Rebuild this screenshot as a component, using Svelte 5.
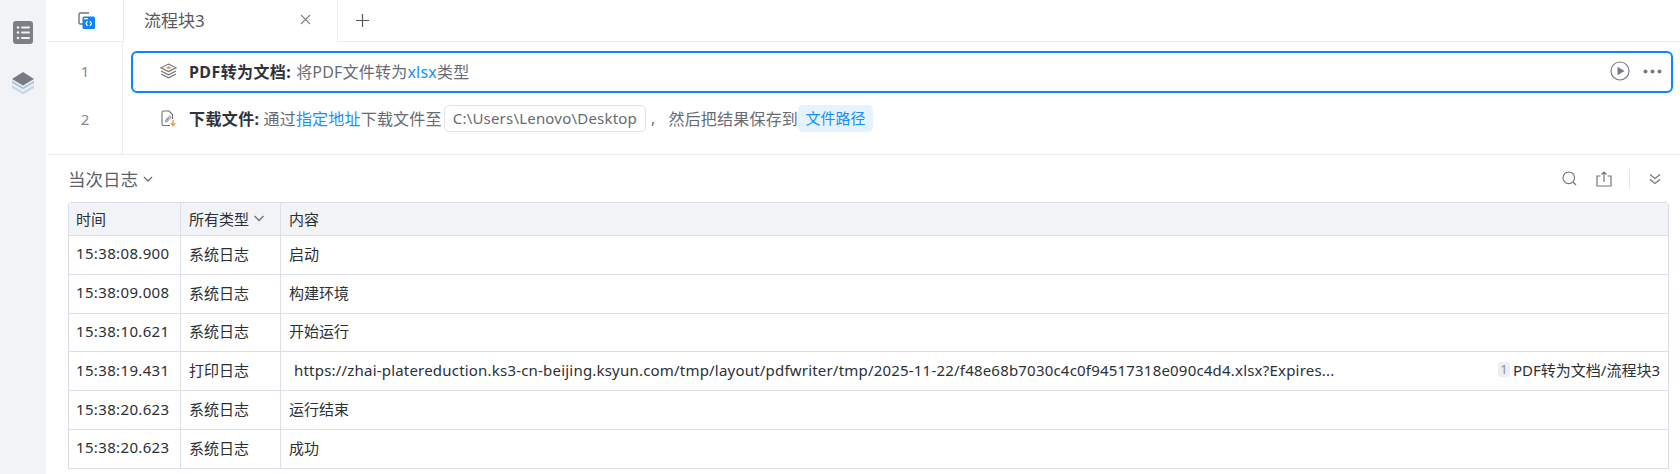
<script>
  const rows = [
    { t: '15:38:08.900', k: '系统日志', c: '启动' },
    { t: '15:38:09.008', k: '系统日志', c: '构建环境' },
    { t: '15:38:10.621', k: '系统日志', c: '开始运行' },
    { t: '15:38:19.431', k: '打印日志', c: 'https://zhai-platereduction.ks3-cn-beijing.ksyun.com/tmp/layout/pdfwriter/tmp/2025-11-22/f48e68b7030c4c0f94517318e090c4d4.xlsx?Expires...', link: true },
    { t: '15:38:20.623', k: '系统日志', c: '运行结束' },
    { t: '15:38:20.623', k: '系统日志', c: '成功' }
  ];
</script>

<div class="page">
  <aside class="side">
    <svg class="side-list" width="20" height="23" viewBox="0 0 20 23">
      <rect width="20" height="23" rx="3" fill="#7b8087"/>
      <g fill="#eef0f4">
        <circle cx="5" cy="6.5" r="1.3"/><circle cx="5" cy="11.5" r="1.3"/><circle cx="5" cy="17" r="1.3"/>
        <rect x="8" y="5.5" width="9" height="2" rx="1"/><rect x="8" y="10.5" width="9" height="2" rx="1"/><rect x="8" y="16" width="9" height="2" rx="1"/>
      </g>
    </svg>
    <svg class="side-layers" width="24" height="24" viewBox="0 0 24 24">
      <path d="M1 14l11 6.500L23 14v3l-11 6.500L1 17z" fill="#c9d8e8"/>
      <path d="M1 9.500l11 6.500 11-6.500v2.500l-11 6.500L1 12z" fill="#b6c6d8"/>
      <path d="M12 1l11 7-11 6.500L1 8z" fill="#777c84"/>
    </svg>
  </aside>

  <main class="main">
    <div class="tabs">
      <div class="tab-icon">
        <svg width="17" height="17" viewBox="0 0 17 17">
          <path d="M11 1H2.500A1.500 1.500 0 0 0 1 2.500V10.500A1.500 1.500 0 0 0 2.500 12H5" fill="none" stroke="#71767d" stroke-width="1.400"/>
          <rect x="4.500" y="4.500" width="12.500" height="12.500" rx="1.500" fill="#0a84ff"/>
          <rect x="6" y="6" width="4" height="1.300" fill="#fff"/>
          <path d="M9.500 9.200 8 11.500l1.500 2.300M12 9.200l1.500 2.300-1.500 2.300" fill="none" stroke="#fff" stroke-width="1.200"/>
        </svg>
      </div>
      <div class="tab">
        <span>流程块3</span>
        <svg width="11" height="11" viewBox="0 0 11 11"><path d="M1 1l9 9M10 1l-9 9" stroke="#7f8389" stroke-width="1.100" fill="none"/></svg>
      </div>
      <div class="add">
        <svg width="13" height="13" viewBox="0 0 13 13"><path d="M6.500 0v13M0 6.500h13" stroke="#555a61" stroke-width="1.200"/></svg>
      </div>
    </div>

    <div class="flow">
      <div class="nums"><div class="num">1</div><div class="num">2</div></div>
      <div class="steps">
        <div class="step active">
          <svg class="step-ico" width="17" height="16" viewBox="0 0 17 16">
            <path d="M8.500 1 16 4.800 8.500 8.600 1 4.800z" fill="none" stroke="#6d7279" stroke-width="1.100"/>
            <path d="M5.500 4.800 8.500 3.500l3 1.300-3 1.300z" fill="#ff8a1e"/>
            <path d="M1 8l7.500 3.800L16 8M1 11l7.500 3.800L16 11" fill="none" stroke="#6d7279" stroke-width="1.100"/>
          </svg>
          <b>PDF转为文档:</b>
          <span class="desc">将PDF文件转为<em>xlsx</em>类型</span>
          <span class="step-tools">
            <svg width="20" height="20" viewBox="0 0 20 20"><circle cx="10" cy="10" r="9" fill="none" stroke="#777c83" stroke-width="1.200"/><path d="M7.500 5.800 14.500 10l-7 4.200z" fill="#777c83"/></svg>
            <svg width="19" height="5" viewBox="0 0 19 5"><circle cx="2.500" cy="2.500" r="2" fill="#777c83"/><circle cx="9.500" cy="2.500" r="2" fill="#777c83"/><circle cx="16.500" cy="2.500" r="2" fill="#777c83"/></svg>
          </span>
        </div>
        <div class="step">
          <svg class="step-ico" width="15" height="17" viewBox="0 0 15 17">
            <path d="M9 15.500H2.500A1.500 1.500 0 0 1 1 14V2.500A1.500 1.500 0 0 1 2.500 1H8l3.500 3.500V9" fill="none" stroke="#6d7279" stroke-width="1.100"/>
            <path d="M4.500 10.500 8 6.500a1 1 0 0 1 1.500 1.300L5.700 12a.6.600 0 0 1-1-.8L8 7.500" fill="none" stroke="#6d7279" stroke-width=".9"/>
            <path d="M12 10v5M9.800 13.200 12 15.600l2.200-2.400" fill="none" stroke="#ff8a1e" stroke-width="1.200"/>
          </svg>
          <b>下载文件:</b>
          <span class="desc">通过<em>指定地址</em>下载文件至</span>
          <span class="path">C:\Users\Lenovo\Desktop</span>
          <span class="desc comma">,</span>
          <span class="desc then">然后把结果保存到</span>
          <span class="var">文件路径</span>
        </div>
      </div>
    </div>

    <section class="log">
      <div class="log-head">
        <div class="log-title">当次日志
          <svg width="10" height="6" viewBox="0 0 10 6"><path d="M1 1l4 4 4-4" fill="none" stroke="#6e7278" stroke-width="1.300"/></svg>
        </div>
        <div class="log-tools">
          <svg width="15" height="15" viewBox="0 0 15 15"><circle cx="6.800" cy="6.800" r="5.800" fill="none" stroke="#70757c" stroke-width="1.200"/><path d="M11 11l3 3" stroke="#70757c" stroke-width="1.200"/></svg>
          <svg class="share" width="16" height="16" viewBox="0 0 16 16"><path d="M4.500 5H1v10h14V5h-3.500" fill="none" stroke="#70757c" stroke-width="1.200"/><path d="M8 11V1M5.500 3.500 8 1l2.500 2.500" fill="none" stroke="#70757c" stroke-width="1.200"/></svg>
          <i class="sep"></i>
          <svg width="12" height="12" viewBox="0 0 12 12"><path d="M1 1.500l5 4 5-4M1 6.500l5 4 5-4" fill="none" stroke="#70757c" stroke-width="1.200"/></svg>
        </div>
      </div>

      <div class="table">
        <div class="row head">
          <div class="c1">时间</div>
          <div class="c2">所有类型
            <svg width="12" height="7" viewBox="0 0 12 7"><path d="M1.500 1l4.500 4.500L10.500 1" fill="none" stroke="#6e7278" stroke-width="1.300"/></svg>
          </div>
          <div class="c3">内容</div>
        </div>
        {#each rows as r}
          <div class="row">
            <div class="c1 time">{r.t}</div>
            <div class="c2">{r.k}</div>
            <div class="c3" class:link={r.link}>
              <span class="msg">{r.c}</span>
              {#if r.link}
                <span class="src"><i>1</i>PDF转为文档/流程块3</span>
              {/if}
            </div>
          </div>
        {/each}
      </div>
    </section>
  </main>
</div>

<style>
  :global(body) {
    margin: 0;
    background: #fff;
    overflow: hidden;
  }
  .page {
    display: flex;
    height: 474px;
    overflow: hidden;
    font-family: "Noto Sans", "Noto Sans CJK SC", sans-serif;
    font-size: 15px;
    color: #2b2f36;
  }
  .side {
    width: 46px;
    flex: none;
    background: #f1f3f7;
    display: flex;
    flex-direction: column;
    align-items: center;
    padding-top: 21px;
    box-sizing: border-box;
  }
  .side-layers { margin-top: 27px; margin-left: -1px; }
  .main { flex: 1; min-width: 0; margin-left: 2px; }
  .tabs {
    display: flex;
    height: 42px;
    box-sizing: border-box;
    align-items: stretch;
  }
  .tab-icon {
    width: 75px;
    border-bottom: 1px solid #ececee;
    display: flex;
    justify-content: center;
    padding-top: 12px;
    box-sizing: border-box;
    padding-left: 2px;
  }
  .tab {
    width: 215px;
    box-sizing: border-box;
    border-left: 1px solid #ececee;
    border-right: 1px solid #ececee;
    padding: 0 26px 3px 20px;
    display: flex;
    justify-content: space-between;
    align-items: center;
    font-size: 17px;
    color: #555a61;
  }
  .add {
    flex: 1;
    display: flex;
    align-items: flex-start;
    border-bottom: 1px solid #ececee;
    padding: 14px 0 0 18px;
    box-sizing: border-box;
  }
  .flow {
    display: flex;
    height: 113px;
    border-bottom: 1px solid #ececee;
    box-sizing: border-box;
  }
  .nums {
    width: 75px;
    box-sizing: border-box;
    border-right: 1px solid #ececee;
    flex: none;
    padding-top: 5px;
  }
  .num {
    height: 48px;
    line-height: 48px;
    text-align: center;
    font-size: 15px;
    color: #85898f;
  }
  .steps { flex: 1; padding: 9px 7px 0 8px; min-width: 0; }
  .step {
    height: 42px;
    box-sizing: border-box;
    display: flex;
    align-items: center;
    padding-left: 27px;
    padding-bottom: 2px;
    border: 2px solid transparent;
    white-space: nowrap;
  }
  .step + .step { margin-top: 5px; }
  .step.active {
    border-color: #0a84ff;
    border-radius: 6px;
  }
  .step-ico { flex: none; margin-right: 12px; }
  .step:not(.active) .step-ico { margin-left: 1px; margin-right: 13px; }
  b { font-weight: 700; font-size: 16px; letter-spacing: .4px; color: #2f333a; margin-right: 5px; }
  .step:not(.active) b { margin-right: 4px; }
  .desc { color: #676b72; font-size: 16px; letter-spacing: .2px; }
  em { font-style: normal; color: #1890ff; }
  .step-tools {
    margin-left: auto;
    display: flex;
    align-items: center;
    gap: 13px;
    padding-right: 9px;
  }
  .path {
    margin-left: 2px;
    height: 27px;
    box-sizing: border-box;
    border: 1px solid #dfe2e8;
    border-radius: 5px;
    padding: 0 8px;
    line-height: 25px;
    font-size: 15px;
    letter-spacing: .2px;
    color: #676b72;
  }
  .comma { margin-left: 5px; }
  .then { margin-left: 13px; }
  .var {
    height: 27px;
    line-height: 27px;
    padding: 0 7.500px;
    border-radius: 5px;
    background: #e6f2fd;
    color: #1890ff;
    font-size: 15px;
  }
  .log { padding: 0 11px 0 20px; }
  .log-head {
    height: 47px;
    display: flex;
    align-items: center;
    justify-content: space-between;
    box-sizing: border-box;
  }
  .log-title {
    display: flex;
    align-items: center;
    gap: 5px;
    font-size: 17.500px;
    color: #5d6168;
  }
  .log-title svg { margin-top: 1px; }
  .log-tools {
    display: flex;
    align-items: center;
    padding-right: 8px;
  }
  .share { margin-left: 19px; }
  .sep { width: 1px; height: 20px; background: #e3e5e9; margin: 0 19px 0 17px; }
  .table {
    border-left: 1px solid #d9dce6;
    border-right: 1px solid #d9dce6;
    border-top: 1px solid #d9dce6;
    border-radius: 4px 4px 0 0;
    font-size: 15px;
    color: #2b2f36;
  }
  .row {
    display: flex;
    height: 38.800px;
    box-sizing: border-box;
    border-bottom: 1px solid #dcdfe8;
    align-items: stretch;
  }
  .row.head { height: 33px; background: #f1f3f7; }
  .row > div { display: flex; align-items: center; box-sizing: border-box; padding-bottom: 3px; }
  .row.head > div { padding-bottom: 2px; }
  .c1 { width: 112px; padding-left: 7px; border-right: 1px solid #dcdfe8; }
  .time { letter-spacing: .35px; }
  .c2 { width: 100px; padding-left: 8px; border-right: 1px solid #dcdfe8; gap: 4px; }
  .c3 { flex: 1; padding-left: 8px; min-width: 0; white-space: nowrap; justify-content: space-between; padding-right: 8px; }
  .c3.link { padding-left: 13px; }
  .link .msg { letter-spacing: .2px; }
  .src { display: inline-flex; align-items: center; }
  .src i {
    font-style: normal;
    font-size: 12px;
    background: #eceef3;
    color: #85898f;
    border-radius: 3px;
    width: 12px;
    height: 15px;
    line-height: 15px;
    text-align: center;
    margin-right: 3px;
  }
</style>
